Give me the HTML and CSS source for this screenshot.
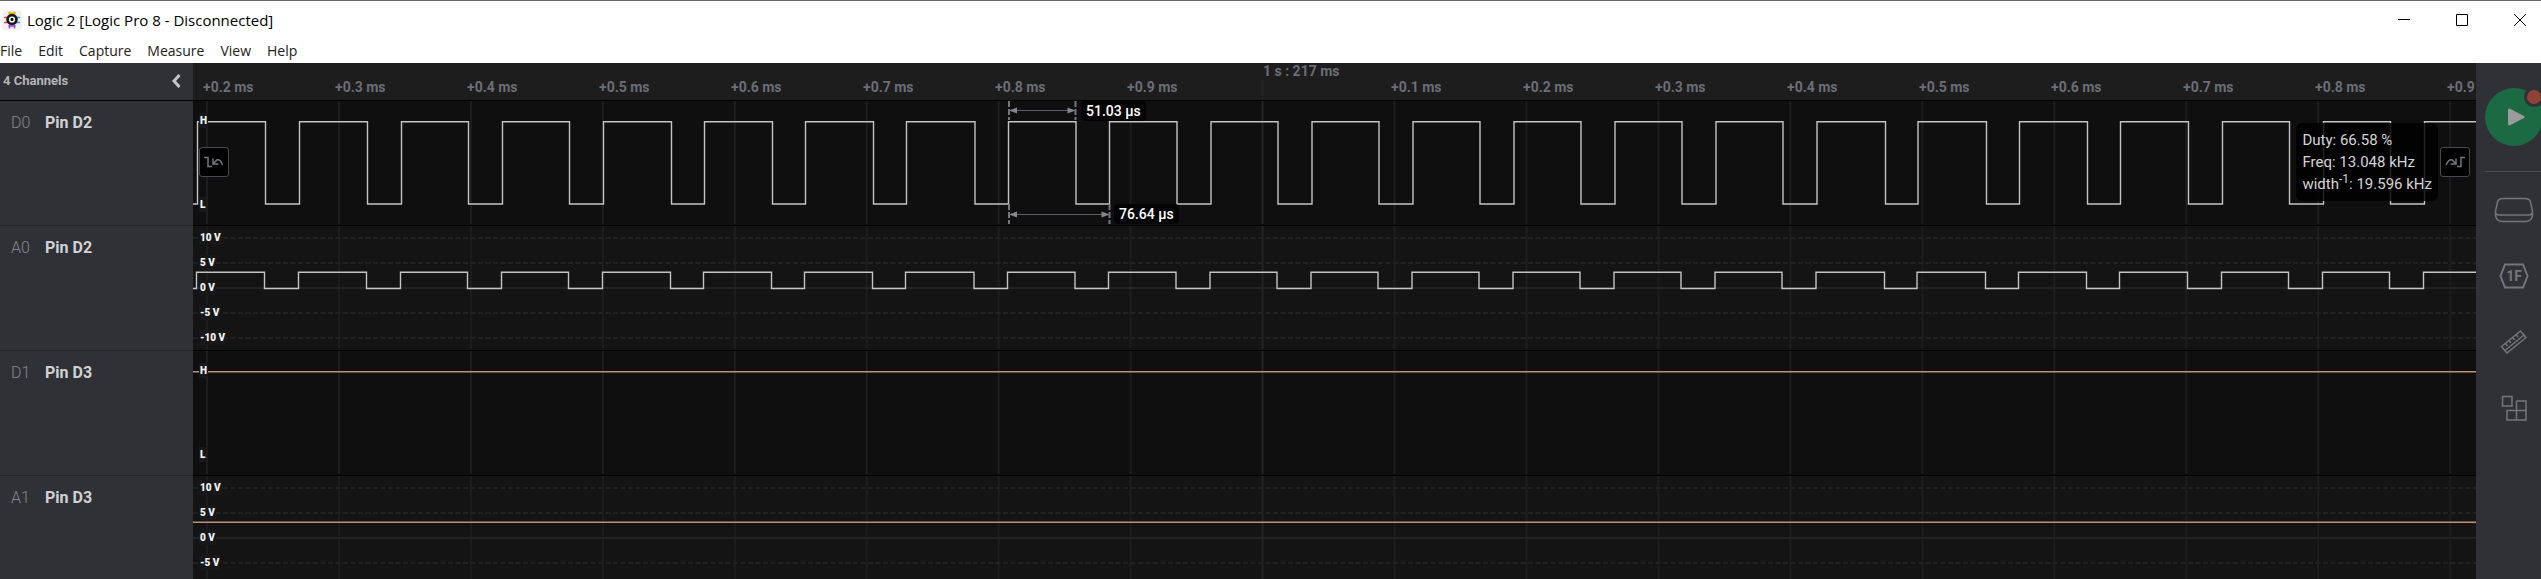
FILE: index.html
```html
<!DOCTYPE html>
<html lang="en">
<head>
<meta charset="utf-8">
<title>Logic 2 [Logic Pro 8 - Disconnected]</title>
<link rel="stylesheet" href="styles.css">
</head>
<body>
<header class="titlebar">
  <svg class="app-icon" width="20" height="20" viewBox="0 0 20 20" aria-hidden="true">
    <rect width="20" height="20" rx="4" fill="#f1f1f4"/>
    <g stroke-width="1.6">
      <path d="M7.5 1.5v4M12.500 1.500v4" stroke="#f2a900"/><path d="M6.500 3h7" stroke="#f2a900"/>
      <path d="M7.500 14.500v4M12.500 14.500v4" stroke="#a04be0"/><path d="M6.500 16h7" stroke="#a04be0"/>
      <path d="M2 7.500h4M2 12.500h4" stroke="#e8463c"/><path d="M14 7.500h4M14 12.500h4" stroke="#2f9bf0"/>
    </g>
    <circle cx="10" cy="9.500" r="5.800" fill="#191919"/>
    <circle cx="10" cy="9.500" r="2.400" fill="none" stroke="#fff" stroke-width="1.400"/>
  </svg>
  <h1 class="window-title">Logic 2 [Logic Pro 8 - Disconnected]</h1>
  <div class="window-controls">
    <button class="window-btn" aria-label="Minimize"><svg width="12" height="12"><path d="M0 5.500h12"/></svg></button>
    <button class="window-btn" aria-label="Maximize"><svg width="12" height="12"><path d="M.5 .5h11v11h-11z"/></svg></button>
    <button class="window-btn" aria-label="Close"><svg width="12" height="12"><path d="M0 0l12 12M12 0L0 12"/></svg></button>
  </div>
</header>
<nav class="menubar">
  <button>File</button><button>Edit</button><button>Capture</button><button>Measure</button><button>View</button><button>Help</button>
</nav>
<main class="workspace">
  <aside class="sidebar">
    <div class="sidebar-head">
      <span>4 Channels</span>
      <button class="collapse" aria-label="Collapse"><svg width="9" height="14" viewBox="0 0 9 14"><path d="M7.500 1L2 7l5.500 6"/></svg></button>
    </div>
    <div class="channel"><span class="channel-id">D0</span><span class="channel-name">Pin D2</span></div>
    <div class="channel"><span class="channel-id">A0</span><span class="channel-name">Pin D2</span></div>
    <div class="channel"><span class="channel-id">D1</span><span class="channel-name">Pin D3</span></div>
    <div class="channel"><span class="channel-id">A1</span><span class="channel-name">Pin D3</span></div>
  </aside>

  <section class="graph">
    <div class="ruler">
      <svg class="plot" data-kind="ruler"></svg>
      <div class="ticks">
        <span>+0.2 ms</span><span>+0.3 ms</span><span>+0.4 ms</span><span>+0.5 ms</span><span>+0.6 ms</span><span>+0.7 ms</span><span>+0.8 ms</span><span>+0.9 ms</span><span class="major">1 s : 217 ms</span><span>+0.1 ms</span><span>+0.2 ms</span><span>+0.3 ms</span><span>+0.4 ms</span><span>+0.5 ms</span><span>+0.6 ms</span><span>+0.7 ms</span><span>+0.8 ms</span><span>+0.9 ms</span>
      </div>
    </div>
    <div class="track digital">
      <svg class="plot" data-kind="digital" data-signal="pulse"></svg>
      <div class="levels"><span>H</span><span>L</span></div>
      <svg class="plot measures" aria-hidden="true">
        <g class="guide"><path d="M816 0v19M882.500 0v19M816 103v20M916.500 103v20"/></g>
        <path class="span-line" d="M818 9.500h63M818 113.500h97"/>
        <path class="arrow" d="M816 9.500l8-3v6zM882.500 9.500l-8-3v6zM816 113.500l8-3v6zM916.500 113.500l-8-3v6z"/>
      </svg>
      <output class="measure measure-width">51.03 µs</output>
      <output class="measure measure-period">76.64 µs</output>
      <button class="edge edge-prev" aria-label="Previous edge"><svg width="20" height="12" viewBox="0 0 20 12"><path d="M0 1.500h4v9h4"/><path d="M9 2.500v5.500h5.500M9.500 7.500L13 3.800Q16.500 3 18.500 9"/></svg></button>
      <button class="edge edge-next" aria-label="Next edge"><svg width="20" height="12" viewBox="0 0 20 12"><path d="M20 1.500h-4v9h-4"/><path d="M11 2.500v5.500H5.500M10.500 7.500L7 3.800Q3.500 3 1 9"/></svg></button>
      <div class="stats">
        <p>Duty: 66.58 %</p>
        <p>Freq: 13.048 kHz</p>
        <p>width<sup>-1</sup>: 19.596 kHz</p>
      </div>
    </div>
    <div class="track analog">
      <svg class="plot" data-kind="analog" data-signal="pulse"></svg>
      <div class="levels"><span>10 V</span><span>5 V</span><span>0 V</span><span>-5 V</span><span>-10 V</span></div>
    </div>
    <div class="track digital">
      <svg class="plot" data-kind="digital" data-signal="high"></svg>
      <div class="levels"><span>H</span><span>L</span></div>
    </div>
    <div class="track analog">
      <svg class="plot" data-kind="analog" data-signal="high"></svg>
      <div class="levels"><span>10 V</span><span>5 V</span><span>0 V</span><span>-5 V</span></div>
    </div>
  </section>

  <aside class="toolbar">
    <button class="play" aria-label="Start capture">
      <svg width="58" height="58" viewBox="0 0 58 58">
        <circle cx="29" cy="29" r="29" fill="#1b6a43"/>
        <path d="M24 21.500v15l14.500-7.500z" fill="#9b9b9b" stroke="#9b9b9b" stroke-width="2" stroke-linejoin="round"/>
        <circle cx="49" cy="9" r="10" fill="#303136"/><circle cx="49" cy="9" r="7" fill="#8e4238"/>
      </svg>
    </button>
    <hr>
    <button class="tool" aria-label="Device"><svg width="40" height="26" viewBox="0 0 40 26"><path d="M9 1.500h22q4.500 0 5.500 3.500l2 9v4q-.5 6-6.500 6.500H8q-6-.5-6.500-6.500v-4l2-9q1-3.500 5.500-3.500zM2 16.500q1 1.500 4 1.500h28q3 0 4-1.500"/></svg></button>
    <button class="tool" aria-label="Analyzers"><svg width="30" height="26" viewBox="0 0 30 26"><path class="bold" d="M6 1.500h18l4.500 11.500-4.500 11.500h-18L1.500 13z"/><text x="15" y="18" text-anchor="middle">1F</text></svg></button>
    <button class="tool" aria-label="Measurements"><svg width="28" height="26" viewBox="0 0 28 26"><path d="M1.500 17.500L20.500 2l5.500 6.500L7 24zM5 21.500L24 6M5.500 14.500l2 2.500M9 11.500l2 2.500M12.500 8.500l2 2.500M16 5.500l2 2.500"/></svg></button>
    <button class="tool" aria-label="Extensions"><svg width="26" height="26" viewBox="0 0 26 26"><path d="M1.500 1.500h9.500v9.500h-9.500zM15.500 6h9.500v19h-19v-9.500h19M15.500 6v19"/></svg></button>
  </aside>
</main>
<script src="plot.js"></script>
</body>
</html>
```

FILE: styles.css
```css
* { box-sizing: border-box; }

body {
  margin: 0;
  height: 100vh;
  display: flex;
  flex-direction: column;
  overflow: hidden;
  background: #fff;
  border-top: 1px solid #6b6b6b;
  font-family: Roboto, sans-serif;
}

button {
  border: 0;
  padding: 0;
  background: none;
  font: inherit;
  color: inherit;
}

svg { display: block; }

.titlebar {
  flex: none;
  display: flex;
  align-items: center;
  height: 38px;
  padding-left: 2px;
  gap: 5px;
}

.window-title {
  margin: 0;
  font: 400 15px/20px "Open Sans", "Noto Sans", sans-serif;
  color: #000;
}

.window-controls {
  display: flex;
  gap: 16px;
  margin-left: auto;
}

.window-btn {
  width: 42px;
  height: 38px;
  display: grid;
  place-items: center;
}

.window-btn path {
  fill: none;
  stroke: #000;
  stroke-width: 1;
}

.menubar {
  flex: none;
  display: flex;
  gap: 16px;
  height: 24px;
  font: 400 14px/24px "Open Sans", "Noto Sans", sans-serif;
  color: #222;
}

.workspace {
  flex: 1;
  min-height: 0;
  display: flex;
  overflow: hidden;
}

.sidebar {
  flex: 0 0 193px;
  background: #303136;
  color: #d0d1d4;
}

.sidebar-head {
  display: flex;
  align-items: center;
  justify-content: space-between;
  height: 38px;
  padding: 0 12px 2px 3px;
  border-bottom: 1px solid #000;
  font-size: 13px;
  font-weight: 700;
  color: #b4b5b9;
}

.collapse path {
  fill: none;
  stroke: #c4c5c8;
  stroke-width: 3;
}

.channel {
  display: flex;
  align-items: flex-start;
  height: 125px;
  padding: 12px 0 0 11px;
  border-bottom: 1px solid #242528;
  font-size: 16px;
  line-height: 20px;
}

.channel-id {
  width: 34px;
  font-weight: 300;
  color: #85868b;
}

.channel-name { font-weight: 700; }

.graph {
  flex: 1;
  min-width: 0;
  overflow: hidden;
  background: #141414;
}

.ruler {
  position: relative;
  height: 38px;
  background: #1d1d1d;
  border-bottom: 1px solid #000;
  overflow: hidden;
}

.ticks {
  position: relative;
  display: flex;
  align-items: flex-end;
  height: 100%;
  padding: 0 0 5px 10px;
  font-size: 14px;
  line-height: 16px;
  font-weight: 700;
  color: #6c6d77;
}

.ticks span {
  flex: 0 0 132px;
  white-space: nowrap;
}

.ticks .major {
  padding-left: 4px;
  align-self: flex-start;
}

.track {
  position: relative;
  height: 125px;
  border-bottom: 1px solid #000;
}

.digital { background: #0f0f0f; }
.analog { background: #141414; }

.plot {
  position: absolute;
  left: 0;
  top: 0;
  width: 100%;
  height: 100%;
}

.grid { fill: none; stroke: #1d1d1f; stroke-width: 2; }
.grid-major { stroke: #232325; }
.volt { fill: none; stroke: #212122; stroke-width: 2; stroke-dasharray: 5 2.5; }
.volt-zero { stroke: #232325; stroke-dasharray: none; }
.wave { fill: none; stroke: #c4c4c4; stroke-width: 1.4; }
.wave-orange { stroke: #c08f7a; }

.levels {
  position: relative;
  display: flex;
  flex-direction: column;
  align-items: flex-start;
  padding-left: 6px;
  font-size: 10px;
  line-height: 15px;
  font-weight: 900;
  color: #f4f4f4;
}

.levels span {
  padding: 0 1px;
  background: #18181a;
}

.analog .levels { padding-top: 4px; gap: 10px; }
.digital .levels { padding-top: 12px; gap: 69px; }

.guide path {
  fill: none;
  stroke: #74757f;
  stroke-width: 2;
  stroke-dasharray: 6 2;
}

.span-line { fill: none; stroke: #5c5d68; stroke-width: 1; }
.arrow { fill: #858692; }

.measure {
  position: absolute;
  padding: 0 5px;
  border-radius: 4px;
  background: #040404;
  color: #fff;
  font-size: 14px;
  line-height: 20px;
  font-weight: 500;
}

.measure-width { left: 888px; top: 0; }
.measure-period { left: 921px; top: 103px; }

.edge {
  position: absolute;
  top: 46px;
  width: 30px;
  height: 30px;
  display: grid;
  place-items: center;
  border: 1px solid #48484e;
  border-radius: 3px;
  background: #000;
}

.edge-prev { left: 6px; }
.edge-next { right: 6px; }

.edge path {
  fill: none;
  stroke: #74757f;
  stroke-width: 1.5;
}

.stats {
  position: absolute;
  right: 38px;
  top: 22px;
  padding: 6px;
  border-radius: 6px;
  background: rgba(0, 0, 0, .82);
  color: #d4d4d6;
  font-size: 15px;
  line-height: 22px;
  white-space: nowrap;
}

.stats p { margin: 0; }
.stats sup { font-size: 12px; line-height: 0; }

.toolbar {
  flex: 0 0 65px;
  padding: 25px 0 0 9px;
  overflow: hidden;
  background: #303136;
}

.play { display: block; }

.toolbar hr {
  width: 58px;
  height: 1px;
  margin: 25px 0 5px;
  border: 0;
  background: #4b4c51;
}

.tool {
  width: 58px;
  height: 66px;
  display: grid;
  place-items: center;
}

.tool path {
  fill: none;
  stroke: #74757a;
  stroke-width: 1.5;
}

.tool .bold { stroke-width: 2; }

.tool text {
  fill: #74757a;
  font-size: 14px;
  font-weight: 700;
}
```

FILE: plot.js
```js
const NS = "http://www.w3.org/2000/svg";
const MAJOR_X = 1069.6, STEP = 131.95;

// Captured edge positions of the pulse train.
const RISES = [4.5, 106.5, 208.5, 309.5, 410.5, 511.5, 612.5, 713.5, 815.5, 916.5, 1018, 1119,
  1220, 1321, 1422, 1523, 1624, 1725, 1826.5, 1927.5, 2029.5, 2130.5, 2231.5];
const FALLS = [72.5, 174.5, 275.5, 376.5, 478.5, 579.5, 680.5, 782, 883, 984, 1085, 1186,
  1287, 1388, 1489, 1590, 1692.5, 1793.5, 1894.5, 1995.5, 2096.5, 2197.5, 2299];

function add(svg, cls, d) {
  const path = document.createElementNS(NS, "path");
  path.setAttribute("class", cls);
  path.setAttribute("d", d);
  svg.appendChild(path);
}

function pulse(high, low, shift) {
  let d = `M0 ${low}`;
  RISES.forEach((x, i) => {
    d += `H${x + shift}V${high}H${FALLS[i] + shift}V${low}`;
  });
  return d;
}

function draw() {
  document.querySelectorAll(".plot[data-kind]").forEach((svg) => {
    const width = svg.getBoundingClientRect().width;
    const kind = svg.dataset.kind;
    svg.replaceChildren();
    for (let k = -8; MAJOR_X + k * STEP < width; k++) {
      const top = kind !== "ruler" ? 0 : k === 0 ? 17 : 32;
      const bottom = kind === "ruler" ? 36 : 123;
      add(svg, k === 0 ? "grid grid-major" : "grid", `M${MAJOR_X + k * STEP} ${top}V${bottom}`);
    }
    if (kind === "ruler") return;
    const analog = kind === "analog";
    if (analog) {
      [12, 37, 62, 87, 112].forEach((y) => {
        add(svg, y === 62 ? "volt volt-zero" : "volt", `M0 ${y}H${width}`);
      });
    }
    const high = analog ? 46.2 : 20.7;
    const low = analog ? 62.5 : 103;
    if (svg.dataset.signal === "pulse") {
      add(svg, "wave", pulse(high, low, analog ? -1 : 0));
    } else {
      add(svg, "wave wave-orange", `M0 ${high}H${width}`);
    }
  });
}

draw();
window.addEventListener("resize", draw);
```
